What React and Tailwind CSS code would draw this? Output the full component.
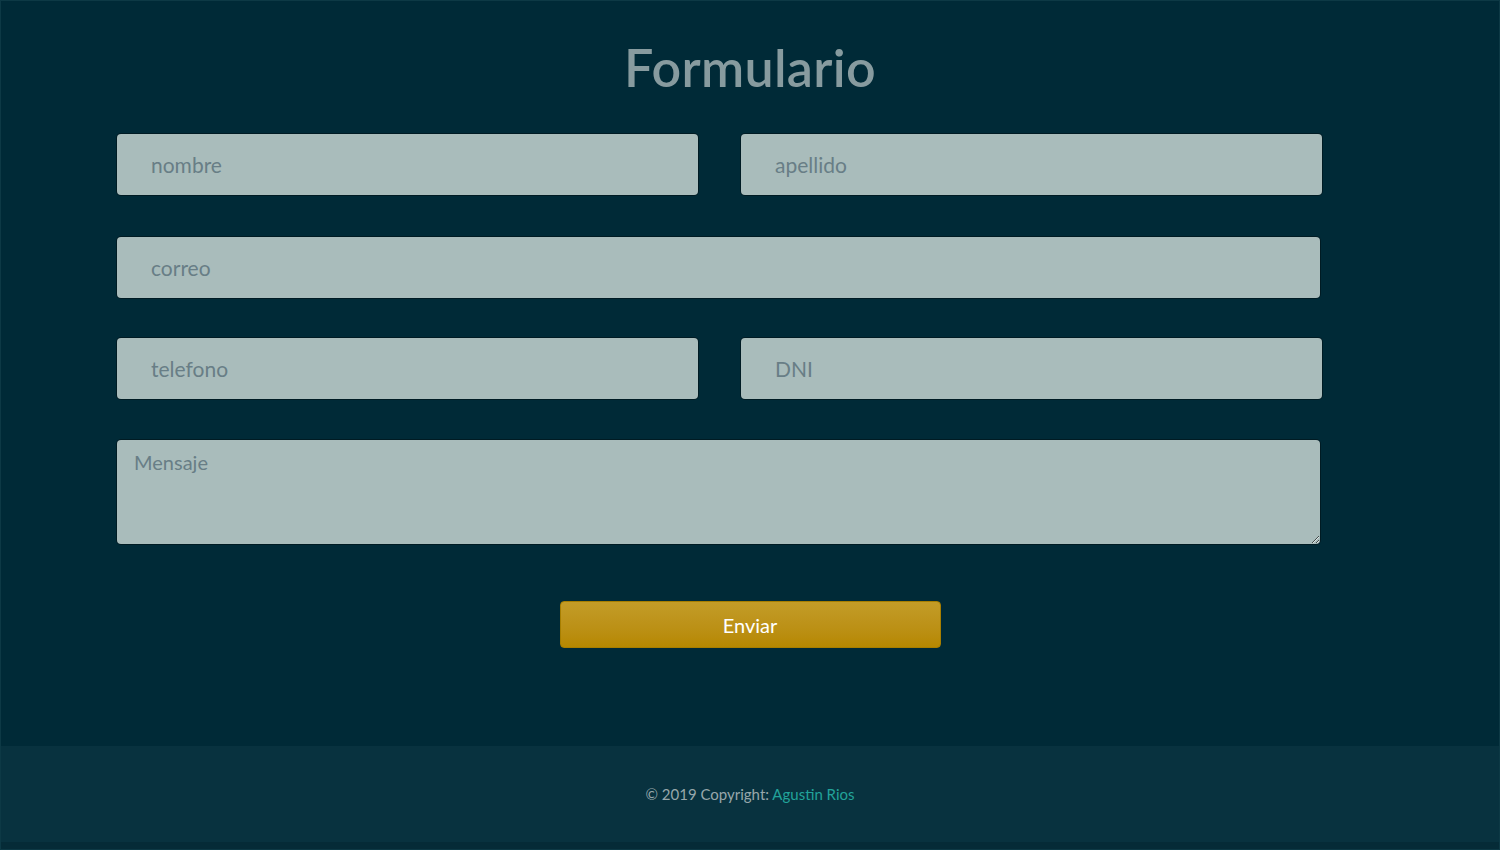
export default function App() {
  const font = { fontFamily: "Lato, 'Open Sans', sans-serif" };
  const inputCls =
    "h-[61px] rounded-[4px] bg-[#a9bcbb] pl-[34px] text-[21px] text-[#5f7580] placeholder:text-[#687e86] outline-none shadow-[0_0_0_1px_rgba(0,0,0,0.35)]";
  return (
    <div
      className="w-[1500px] h-[850px] flex flex-col bg-[#002a37] border border-[#0d3945] overflow-hidden"
      style={font}
    >
      <main className="flex-1 flex flex-col">
        <h1 className="text-center text-[52px] leading-none font-semibold text-[#879b9f] mt-[40px] mb-[41px] tracking-[0.3px]">
          Formulario
        </h1>
        <div className="pl-[116px] w-[1323px] flex flex-col">
          <div className="flex gap-[43px]">
            <input className={inputCls + " w-[581px]"} placeholder="nombre" />
            <input className={inputCls + " w-[581px]"} placeholder="apellido" />
          </div>
          <input className={inputCls + " w-[1203px] mt-[42px]"} placeholder="correo" />
          <div className="flex gap-[43px] mt-[40px]">
            <input className={inputCls + " w-[581px]"} placeholder="telefono" />
            <input className={inputCls + " w-[581px]"} placeholder="DNI" />
          </div>
          <textarea
            className="w-[1203px] h-[104px] mt-[41px] rounded-[4px] bg-[#a9bcbb] px-[17px] pt-[7px] text-[20px] text-[#5f7580] placeholder:text-[#687e86] outline-none shadow-[0_0_0_1px_rgba(0,0,0,0.35)] resize"
            placeholder="Mensaje"
          />
        </div>
        <div className="flex justify-center mt-[57px]">
          <button className="w-[381px] h-[47px] rounded-[4px] bg-gradient-to-b from-[#c39c27] to-[#b68800] text-white text-[20px] border border-[#a77e00]">
            Enviar
          </button>
        </div>
      </main>
      <footer className="h-[103px] shrink-0 bg-[#08323f] flex items-center justify-center text-[15px] text-[#97a7ab] border-b-[7px] border-[#052b37]">
        <span>
          © 2019 Copyright: <a className="text-[#22a39a]">Agustin Rios</a>
        </span>
      </footer>
    </div>
  );
}
